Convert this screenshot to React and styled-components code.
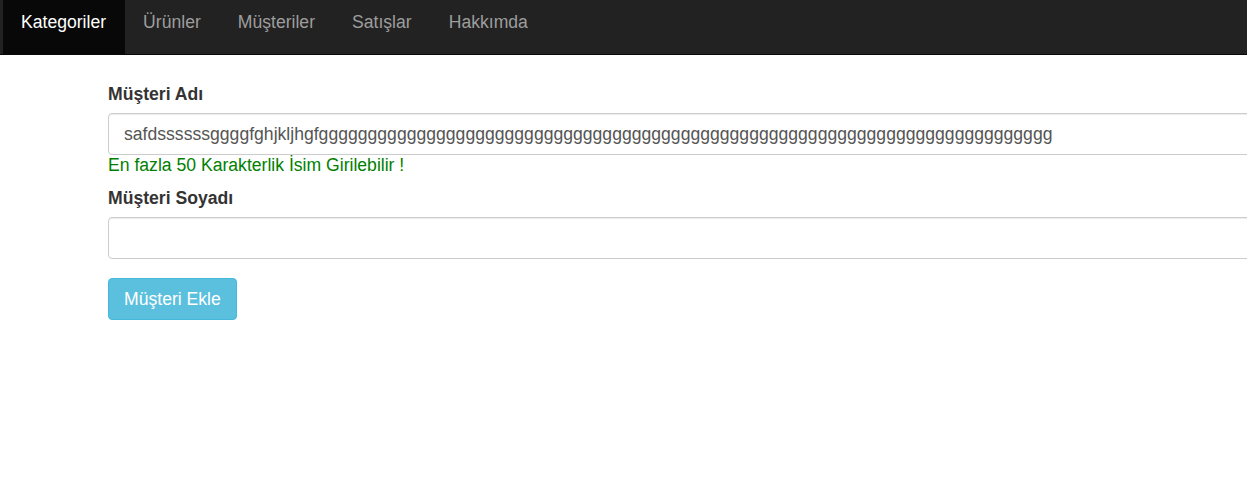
import React from "react";
import styled, { createGlobalStyle } from "styled-components";

const Global = createGlobalStyle`
  html, body { margin: 0; padding: 0; background: #fff; overflow: hidden; }
  body { font-family: "Liberation Sans", Arial, sans-serif; font-size: 17.6px; color: #333; }
  * { box-sizing: border-box; }
`;

const Navbar = styled.nav`
  display: flex;
  height: 55px;
  background: #222;
  border-bottom: 1px solid #080808;
  padding-left: 3px;
`;

const NavItem = styled.a`
  display: flex;
  align-items: center;
  padding: 0 19px 9px 18px;
  font-size: 17.6px;
  color: ${(p) => (p.$active ? "#fff" : "#9d9d9d")};
  background: ${(p) => (p.$active ? "#080808" : "transparent")};
  text-decoration: none;
  height: 54px;
`;

const Main = styled.main`
  padding: 28px 0 0 108px;
  width: 1400px;
`;

const Label = styled.label`
  display: block;
  font-weight: bold;
  font-size: 17.6px;
  line-height: 22px;
  margin-bottom: 8px;
  color: #333;
`;

const Input = styled.input`
  display: block;
  width: 100%;
  height: 42px;
  padding: 0 15px;
  font-family: "Liberation Sans", Arial, sans-serif;
  font-size: 17.6px;
  color: #555;
  border: 1px solid #ccc;
  border-radius: 4px;
  box-shadow: inset 0 1px 1px rgba(0, 0, 0, 0.075);
  outline: none;
`;

const Help = styled.div`
  color: #008000;
  font-size: 17.6px;
  line-height: 20px;
  margin-bottom: 12px;
`;

const Group = styled.div`
  margin-bottom: ${(p) => p.$mb || 0}px;
`;

const Button = styled.button`
  height: 42px;
  padding: 0 15px;
  font-family: "Liberation Sans", Arial, sans-serif;
  font-size: 17.6px;
  color: #fff;
  background: #5bc0de;
  border: 1px solid #46b8da;
  border-radius: 4px;
`;

export default function App() {
  return (
    <>
      <Global />
      <Navbar>
        <NavItem $active>Kategoriler</NavItem>
        <NavItem>Ürünler</NavItem>
        <NavItem>Müşteriler</NavItem>
        <NavItem>Satışlar</NavItem>
        <NavItem>Hakkımda</NavItem>
      </Navbar>
      <Main>
        <Group>
          <Label>Müşteri Adı</Label>
          <Input defaultValue="safdssssssggggfghjkljhgfggggggggggggggggggggggggggggggggggggggggggggggggggggggggggggggggggggggggggg" />
          <Help>En fazla 50 Karakterlik İsim Girilebilir !</Help>
        </Group>
        <Group $mb={19}>
          <Label>Müşteri Soyadı</Label>
          <Input />
        </Group>
        <Button>Müşteri Ekle</Button>
      </Main>
    </>
  );
}
